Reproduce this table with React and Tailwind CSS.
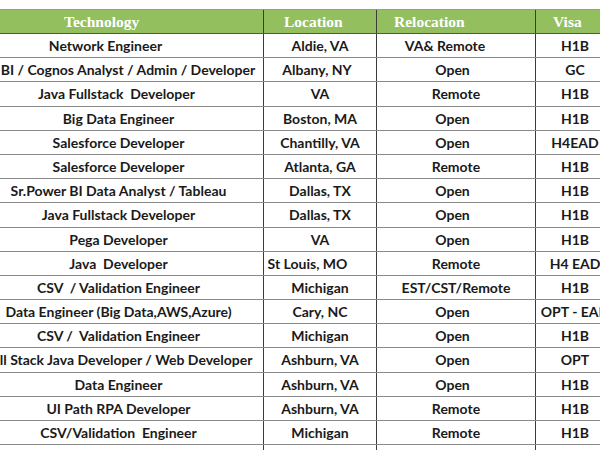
import React from "react";

const rows = [
  ["Network Engineer", "Aldie, VA", "VA& Remote", "H1B", "pr-[26px]", "", "pr-[22px]"],
  ["BI / Cognos Analyst / Admin / Developer", "Albany, NY", "Open", "GC", "pl-[19px]", "pr-[6px]", "pr-[7px]"],
  ["Java Fullstack\u00a0 Developer", "VA", "Remote", "H1B", "pr-[4px]", "", ""],
  ["Big Data Engineer", "Boston, MA", "Open", "H1B", "", "", "pr-[7px]"],
  ["Salesforce Developer", "Chantilly, VA", "Open", "H4EAD", "", "", "pr-[7px]"],
  ["Salesforce Developer", "Atlanta, GA", "Remote", "H1B", "", "", ""],
  ["Sr.Power BI Data Analyst / Tableau", "Dallas, TX", "Open", "H1B", "", "", "pr-[7px]"],
  ["Java Fullstack Developer", "Dallas, TX", "Open", "H1B", "", "", "pr-[7px]"],
  ["Pega Developer", "VA", "Open", "H1B", "", "", "pr-[7px]"],
  ["Java\u00a0 Developer", "St Louis, MO", "Remote", "H4 EAD", "", "pr-[25px]", ""],
  ["CSV\u00a0 / Validation Engineer", "Michigan", "EST/CST/Remote", "H1B", "", "", ""],
  ["Data Engineer (Big Data,AWS,Azure)", "Cary, NC", "Open", "OPT - EAD", "", "", "pr-[7px]"],
  ["CSV /\u00a0 Validation Engineer", "Michigan", "Open", "H1B", "", "", "pr-[7px]"],
  ["Full Stack Java Developer / Web Developer", "Ashburn, VA", "Open", "OPT", "", "", "pr-[7px]"],
  ["Data Engineer", "Ashburn, VA", "Open", "H1B", "", "", "pr-[7px]"],
  ["UI Path RPA Developer", "Ashburn, VA", "Remote", "H1B", "", "", ""],
  ["CSV/Validation\u00a0 Engineer", "Michigan", "Remote", "H1B", "", "", ""],
  ["", "", "", "", "", "", ""],
];

export default function App() {
  return (
    <div className="w-[600px] h-[450px] overflow-hidden bg-white pt-[9px]">
      <div className="ml-[-26px] w-[640px] border-t border-[#9a9a9a]">
        <div
          className="flex h-[23px] bg-[#93bf5e] text-white font-bold text-[15.5px] leading-[23px]"
          style={{ fontFamily: '"Liberation Serif", "DejaVu Serif", serif' }}
        >
          <div className="w-[290px] border-r border-[#3c3c3c] pl-[90px]">Technology</div>
          <div className="w-[113px] border-r border-[#3c3c3c] pl-[20px]">Location</div>
          <div className="w-[159px] border-r border-[#3c3c3c] pl-[17px]">Relocation</div>
          <div className="w-[78px] pl-[17px]">Visa</div>
        </div>
        <div className="h-px bg-[#555]" />
        {rows.map((r, i) => (
          <div
            key={i}
            className="flex h-[24.2px] border-b border-[#8a8a8a] text-[14px] font-bold text-[#1a1a1a] leading-[23px] text-center whitespace-nowrap"
            style={{ fontFamily: 'Lato, "Noto Sans", sans-serif' }}
          >
            <div className={`w-[290px] shrink-0 border-r border-[#3c3c3c] flex justify-center ${r[4]}`}>{r[0]}</div>
            <div className={`w-[113px] shrink-0 border-r border-[#3c3c3c] overflow-hidden ${r[5]}`}>{r[1]}</div>
            <div className={`w-[159px] shrink-0 border-r border-[#3c3c3c] overflow-hidden ${r[6]}`}>{r[2]}</div>
            <div className="w-[78px] shrink-0 overflow-hidden">{r[3]}</div>
          </div>
        ))}
      </div>
    </div>
  );
}
